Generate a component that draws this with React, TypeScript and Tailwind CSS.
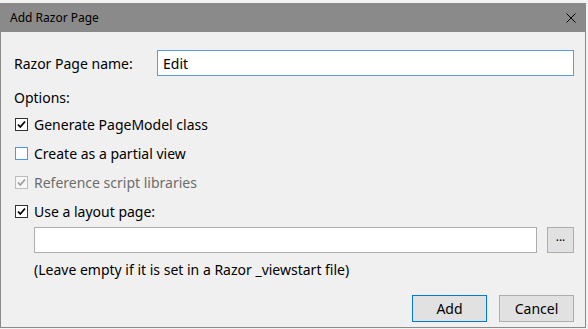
import React from "react";

type CheckProps = {
  label: string;
  checked?: boolean;
  disabled?: boolean;
  focused?: boolean;
};

function CheckBox({ checked, disabled, focused }: Omit<CheckProps, "label">) {
  const stroke = focused ? "#4a98ec" : disabled ? "#bcbcbc" : "#333333";
  const fill = disabled ? "#f7f7f7" : "#ffffff";
  return (
    <svg viewBox="0 0 13 13" className="h-[13px] w-[13px] shrink-0">
      <rect x="0.5" y="0.5" width="12" height="12" fill={fill} stroke={stroke} strokeWidth="1" />
      {checked && (
        <path
          d="M3 6.5 L5.3 9 L10 3.5"
          fill="none"
          stroke={disabled ? "#9e9e9e" : "#000"}
          strokeWidth="1.8"
        />
      )}
    </svg>
  );
}

function CheckRow({ label, checked, disabled, focused }: CheckProps) {
  return (
    <div className="flex h-[29px] items-center">
      <CheckBox checked={checked} disabled={disabled} focused={focused} />
      <span className={disabled ? "ml-[6px] text-[#6d6d6d]" : "ml-[6px] text-black"}>{label}</span>
    </div>
  );
}

export default function App() {
  return (
    <div className="h-[329px] w-[588px] bg-[#f3f3f3] pt-[3px] font-['Noto_Sans',sans-serif] text-[14px] text-black">
      <div className="flex h-[325px] w-[586px] flex-col border border-[#8a8a8a] bg-[#f0f0f0]">
        {/* title bar */}
        <div className="flex h-[28px] items-center justify-between bg-[#8a8a8a] pl-[9px] pr-[9px]">
          <span className="text-[12px]">Add Razor Page</span>
          <svg viewBox="0 0 10 10" className="h-[10px] w-[10px]">
            <path d="M0.5 0.5 L9.5 9.5 M9.5 0.5 L0.5 9.5" stroke="#000" strokeWidth="1" />
          </svg>
        </div>

        <div className="flex flex-1 flex-col pl-[13px] pr-[11px]">
          <div className="mt-[18px] flex h-[26px] items-center">
            <span className="w-[143px]">Razor Page name:</span>
            <div className="flex h-[26px] flex-1 items-center border border-[#569de5] bg-white px-[5px]">
              Edit
            </div>
          </div>

          <div className="mt-[10px] flex h-[22px] items-center">Options:</div>

          <div className="mt-[2px] flex flex-col pl-[1px]">
            <CheckRow label="Generate PageModel class" checked />
            <CheckRow label="Create as a partial view" focused />
            <CheckRow label="Reference script libraries" checked disabled />
            <CheckRow label="Use a layout page:" checked />
          </div>

          <div className="ml-[20px] mt-[1px] flex items-center gap-[10px]">
            <div className="h-[26px] flex-1 border border-[#adadad] bg-white" />
            <button className="flex h-[26px] w-[27px] items-center justify-center border border-[#adadad] bg-[#e1e1e1] pb-[6px] text-[12px]">
              ...
            </button>
          </div>

          <div className="ml-[20px] mt-[6px] flex h-[20px] items-center">
            (Leave empty if it is set in a Razor _viewstart file)
          </div>

          <div className="mt-[16px] flex justify-end gap-[12px]">
            <button className="h-[27px] w-[75px] border border-[#0078d7] bg-[#e1e1e1]">Add</button>
            <button className="h-[27px] w-[75px] border border-[#adadad] bg-[#e1e1e1]">Cancel</button>
          </div>
        </div>
      </div>
    </div>
  );
}
